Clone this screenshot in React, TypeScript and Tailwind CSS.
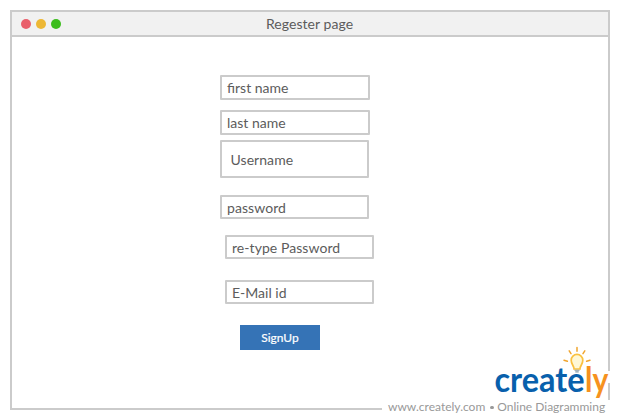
type FieldProps = { label: string; className: string };

function Field({ label, className }: FieldProps) {
  return (
    <div className={`flex items-center rounded-[1px] border-2 border-[#cbcbcb] ${className}`}>
      <span className="whitespace-pre">{label}</span>
    </div>
  );
}

function Logo() {
  return (
    <svg width="130" height="78" viewBox="485 342 130 78" className="block">
      <path d="M606 371H611V383H606Z" fill="#fff" />
      <path
        d="M577 347.6V351.2M569.2 350.9L571 353.6M584.8 350.9L583 353.6M564 360.2L567.4 361.2M590 360.2L586.6 361.2"
        stroke="#f0a52e"
        strokeWidth="1.5"
        strokeLinecap="round"
      />
      <path
        d="M574 369C574 365.6 571.2 364.2 571.2 360.2A5.8 5.8 0 0 1 582.8 360.2C582.8 364.2 580 365.6 580 369Z"
        fill="#fff8d6"
        stroke="#fac13f"
        strokeWidth="1.7"
      />
      <path d="M574.5 370.2H579.5M575.3 371.9H578.7" stroke="#8799a5" strokeWidth="1.1" />
      <g fontFamily="Lato, sans-serif" fontSize="33.5" fontWeight="700">
        <text x="494.5" y="391.5" textLength="90" lengthAdjust="spacingAndGlyphs" fill="#0860ac">
          create
        </text>
        <text x="585" y="391.5" textLength="23.3" lengthAdjust="spacingAndGlyphs" fill="#f6921e">
          ly
        </text>
      </g>
    </svg>
  );
}

export default function App() {
  return (
    <main className="relative h-[420px] w-[620px] overflow-hidden bg-white p-2.5 font-['Lato',sans-serif] text-[14px] leading-[17px] text-[#5c5c5c]">
      <section className="h-[400px] w-[600px] border-2 border-[#cbcbcb]">
        <header className="grid h-[25px] grid-cols-[1fr_auto_1fr] items-center border-b-2 border-[#cbcbcb] bg-[#f1f1f1] pl-[8.5px]">
          <div className="flex gap-[5px]">
            <i className="size-[10px] rounded-full bg-[#e95f6b]" />
            <i className="size-[10px] rounded-full bg-[#edb735]" />
            <i className="size-[10px] rounded-full bg-[#3cbd1d]" />
          </div>
          <h1 className="mr-[9.5px] tracking-[0.06px]">Regester page</h1>
        </header>
        <form className="flex flex-col items-start pt-[38px] pl-[208px]">
          <Field label="first name" className="h-[25px] w-[150px] pl-[5px]" />
          <Field label="last name" className="mt-[10px] h-[25px] w-[150px] pl-[5px]" />
          <Field label="Username" className="mt-[5px] h-[38px] w-[149px] pl-[8.5px] pt-px tracking-[0.06px]" />
          <Field label="password" className="mt-[17px] h-[24px] w-[149px] pl-[5px] pt-px tracking-[0.06px]" />
          <Field label="re-type Password" className="mt-[16px] ml-[5px] h-[24px] w-[149px] pl-[5px] pt-px tracking-[0.06px]" />
          <Field label="E-Mail id" className="mt-[21px] ml-[5px] h-[24px] w-[149px] pl-[5px] pt-px" />
          <button type="button" className="mt-[21px] ml-5 h-[25px] w-20 bg-[#3573b6] text-[12px] text-white [-webkit-text-stroke:0.2px_white]">
            SignUp
          </button>
        </form>
      </section>
      <footer className="absolute right-0 bottom-0 flex h-5 w-[238px] items-center bg-white pb-[7px] pl-[6px] text-[12px] leading-[14px] whitespace-pre text-[#999]">
        <span>www.creately.com</span>
        <i className="mt-[2px] mr-[3.5px] ml-[5px] size-[3.5px] rounded-full bg-[#999]" />
        <span>Online Diagramming</span>
      </footer>
      <div className="absolute right-[5px] bottom-0">
        <Logo />
      </div>
    </main>
  );
}
